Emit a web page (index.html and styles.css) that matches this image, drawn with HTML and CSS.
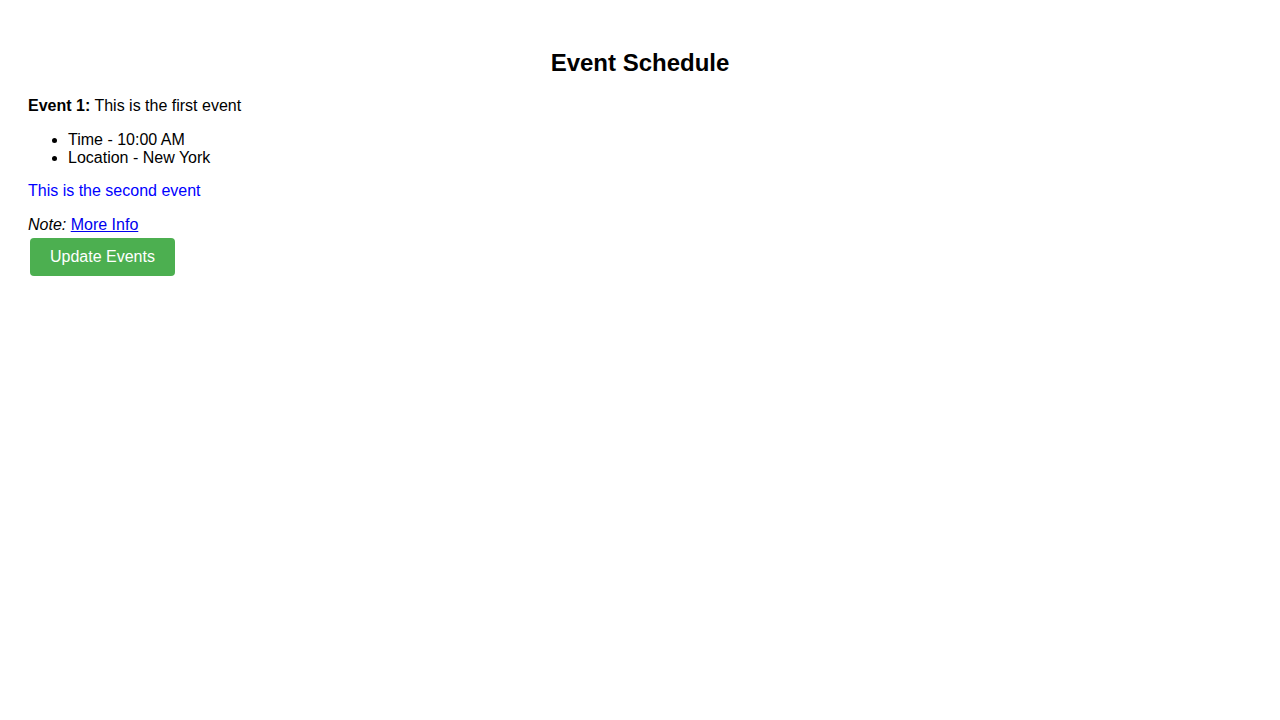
FILE: index.html
```html
<!DOCTYPE html>
<html>
<head>
<meta charset="utf-8">
<link rel="stylesheet" href="styles.css">
</head>
<body>
<h1 class="title">Event Schedule</h1>
<p class="event"><strong>Event 1:</strong> This is the first event</p>
<ul class="details">
  <li>Time - 10:00 AM</li>
  <li>Location - New York</li>
</ul>
<p class="event second">This is the second event</p>
<div class="note"><em>Note:</em> <a href="#" class="more">More Info</a></div>
<button class="update">Update Events</button>
</body>
</html>
```
FILE: styles.css
```css
body {
  margin: 8px;
  padding: 20px;
  font-family: "Liberation Sans", Arial, sans-serif;
  font-size: 16px;
  color: #000;
}
.title {
  text-align: center;
  font-size: 24px;
  margin: 21px 0 20px;
}
.event {
  margin: 16px 0;
}
.second {
  margin-top: 15px;
  color: #0000ff;
}
.details {
  margin: 16px 0 0;
  padding-left: 40px;
}
.note {
  margin: 0;
}
.more {
  color: #0000ee;
}
.update {
  display: block;
  margin: 4px 2px 0;
  padding: 10px 20px;
  font-family: "Liberation Sans", Arial, sans-serif;
  font-size: 16px;
  color: #fff;
  background: #4caf50;
  border: none;
  border-radius: 4px;
}
```
